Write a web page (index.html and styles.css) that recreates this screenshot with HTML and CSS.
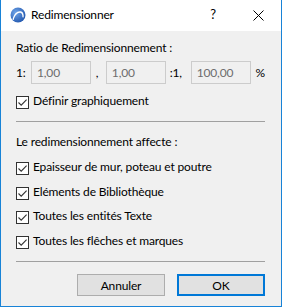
FILE: index.html
```html
<!DOCTYPE html>
<html lang="fr">
<head>
<meta charset="utf-8">
<link rel="stylesheet" href="styles.css">
</head>
<body>
<div class="window">
  <div class="titlebar">
    <svg class="app-icon" width="16" height="16" viewBox="0 0 16 16">
      <defs>
        <radialGradient id="g" cx="0.35" cy="0.35" r="0.8">
          <stop offset="0" stop-color="#6fa4e8"/>
          <stop offset="1" stop-color="#1a4fa8"/>
        </radialGradient>
      </defs>
      <circle cx="8" cy="8" r="7.5" fill="url(#g)"/>
      <path d="M2.5 12.5 C4 6 8 3.2 11.5 4.5 C13.3 5.3 14 7.5 13.6 10.5 L12.4 10.2 C12.5 8 12 6.6 10.8 6 C8 5 5 8 3.6 13.2 Z" fill="#fff"/>
    </svg>
    <span class="title">Redimensionner</span>
    <span class="help">?</span>
    <svg class="close" width="11" height="11" viewBox="0 0 11 11">
      <path d="M0.5 0.5 L10.5 10.5 M10.5 0.5 L0.5 10.5" stroke="#000" stroke-width="1"/>
    </svg>
  </div>
  <div class="content">
    <div class="heading">Ratio de Redimensionnement :</div>
    <div class="ratio-row">
      <span class="lbl-one">1:</span>
      <span class="field">1,00</span>
      <span class="comma">,</span>
      <span class="field">1,00</span>
      <span class="colon">:1,</span>
      <span class="field">100,00</span>
      <span class="pct">%</span>
    </div>
    <label class="check first">
      <span class="box"><svg width="11" height="11" viewBox="0 0 11 11"><path d="M1.5 5.5 L4.2 8.2 L9.6 2.6" fill="none" stroke="#333" stroke-width="1.1"/></svg></span>
      <span>Définir graphiquement</span>
    </label>
    <div class="sep sep1"></div>
    <div class="heading h2">Le redimensionnement affecte :</div>
    <div class="checks">
      <label class="check">
        <span class="box"><svg width="11" height="11" viewBox="0 0 11 11"><path d="M1.5 5.5 L4.2 8.2 L9.6 2.6" fill="none" stroke="#333" stroke-width="1.1"/></svg></span>
        <span>Epaisseur de mur, poteau et poutre</span>
      </label>
      <label class="check">
        <span class="box"><svg width="11" height="11" viewBox="0 0 11 11"><path d="M1.5 5.5 L4.2 8.2 L9.6 2.6" fill="none" stroke="#333" stroke-width="1.1"/></svg></span>
        <span>Eléments de Bibliothèque</span>
      </label>
      <label class="check">
        <span class="box"><svg width="11" height="11" viewBox="0 0 11 11"><path d="M1.5 5.5 L4.2 8.2 L9.6 2.6" fill="none" stroke="#333" stroke-width="1.1"/></svg></span>
        <span>Toutes les entités Texte</span>
      </label>
      <label class="check">
        <span class="box"><svg width="11" height="11" viewBox="0 0 11 11"><path d="M1.5 5.5 L4.2 8.2 L9.6 2.6" fill="none" stroke="#333" stroke-width="1.1"/></svg></span>
        <span>Toutes les flêches et marques</span>
      </label>
    </div>
    <div class="sep sep2"></div>
    <div class="buttons">
      <button class="btn">Annuler</button>
      <button class="btn ok">OK</button>
    </div>
  </div>
</div>
</body>
</html>
```
FILE: styles.css
```css
* { box-sizing: border-box; }
html, body { margin: 0; padding: 0; }
body {
  width: 282px;
  height: 307px;
  font-family: Lato, "Noto Sans", sans-serif;
  font-size: 12px;
  letter-spacing: -0.15px;
  color: #000;
  overflow: hidden;
}
.window {
  width: 282px;
  height: 307px;
  border: 1px solid #1883d7;
  border-top: none;
  display: flex;
  flex-direction: column;
  background: #f0f0f0;
}
.titlebar {
  height: 31px;
  flex: none;
  background: #fff;
  display: flex;
  align-items: flex-start;
  padding: 7px 0 0 9px;
}
.app-icon { flex: none; margin-right: 5px; }
.title { line-height: 16px; }
.help { margin-left: auto; font-size: 13px; line-height: 16px; margin-top: -1px; margin-right: 37px; }
.close { margin-top: 3px; margin-right: 17px; }
.content {
  flex: 1;
  padding: 0 16px 0 15px;
  display: flex;
  flex-direction: column;
}
.heading { line-height: 16px; margin-top: 9px; }
.ratio-row {
  display: flex;
  align-items: center;
  height: 23px;
  margin-top: 5px;
}
.field {
  height: 23px;
  width: 60px;
  border: 1px solid #cccccc;
  background: #f0f0f0;
  color: #6d6d6d;
  padding-left: 5px;
  line-height: 21px;
}
.lbl-one { width: 15px; }
.comma { width: 15px; padding-left: 5px; }
.colon { width: 25px; padding-left: 4px; }
.pct { margin-left: 5px; }
.check {
  display: flex;
  align-items: flex-start;
  height: 16px;
  line-height: 16px;
}
.check.first { margin-top: 9px; }
.box {
  width: 13px;
  height: 13px;
  border: 1px solid #333;
  background: #fff;
  margin: 3px 4px 0 0;
  display: flex;
  align-items: center;
  justify-content: center;
  flex: none;
}
.box svg { display: block; }
.sep {
  height: 1px;
  background: #a0a0a0;
}
.sep1 { margin-top: 12px; }
.h2 { margin-top: 12px; }
.checks {
  display: flex;
  flex-direction: column;
  margin-top: 9px;
}
.checks .check:nth-child(2) { margin-top: 9px; }
.checks .check:nth-child(3) { margin-top: 8px; }
.checks .check:nth-child(4) { margin-top: 9px; }
.sep2 { margin-top: 12px; }
.buttons {
  display: flex;
  justify-content: flex-end;
  gap: 12px;
  margin-top: 12px;
}
.btn {
  width: 88px;
  height: 22px;
  font-family: inherit;
  font-size: 12px;
  letter-spacing: -0.15px;
  background: #e1e1e1;
  border: 1px solid #adadad;
  color: #000;
  padding: 0;
}
.btn.ok { border: 2px solid #0078d7; }
```
